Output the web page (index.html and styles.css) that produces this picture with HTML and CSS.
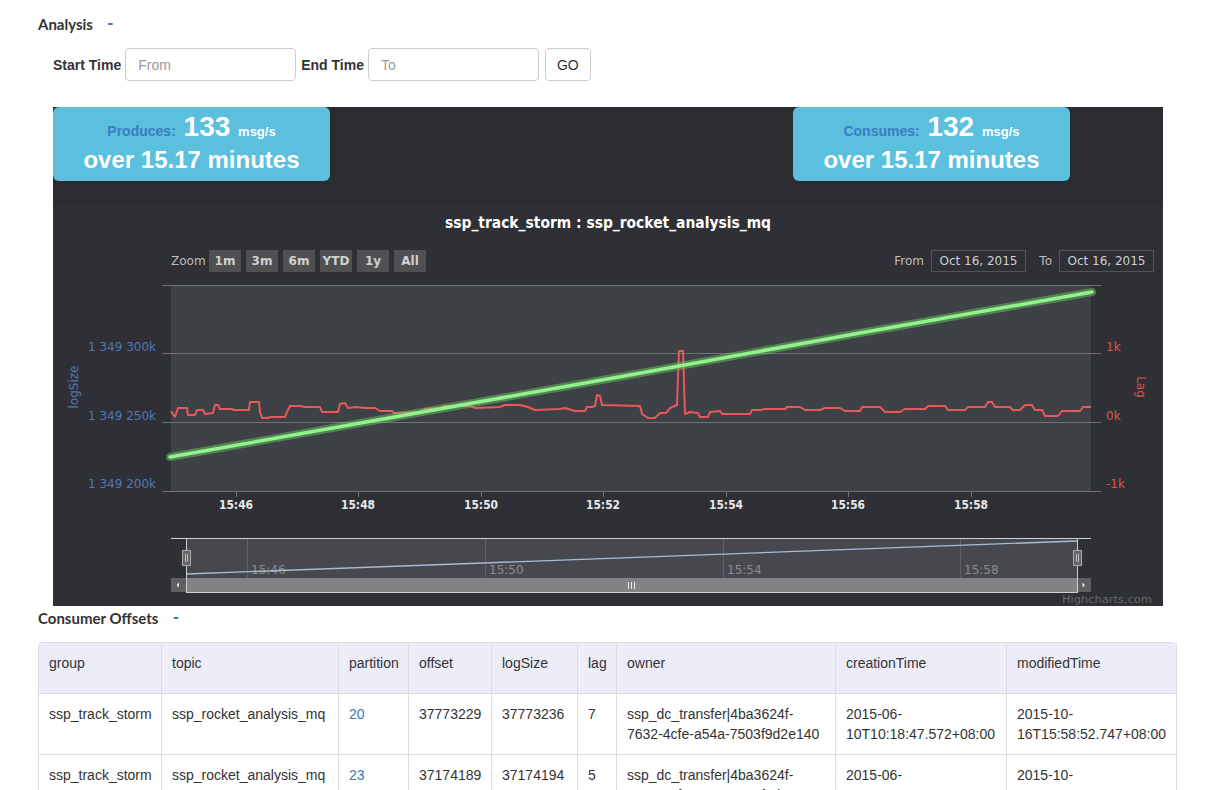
FILE: index.html
```html
<!DOCTYPE html>
<html>
<head>
<meta charset="utf-8">
<title>Analysis</title>
<link rel="stylesheet" href="styles.css">
</head>
<body>
<div class="page">
  <div class="section-title">Analysis <a class="toggle">-</a></div>
  <form class="range-form">
    <label>Start Time</label>
    <input type="text" placeholder="From">
    <label>End Time</label>
    <input type="text" placeholder="To">
    <button type="button">GO</button>
  </form>

  <div class="chart">
    <div class="stats">
      <div class="stat">
        <div class="stat-line1"><span class="stat-label">Produces:</span> <span class="stat-num">133</span> <span class="stat-unit">msg/s</span></div>
        <div class="stat-line2">over 15.17 minutes</div>
      </div>
      <div class="stat">
        <div class="stat-line1"><span class="stat-label">Consumes:</span> <span class="stat-num">132</span> <span class="stat-unit">msg/s</span></div>
        <div class="stat-line2">over 15.17 minutes</div>
      </div>
    </div>
    <svg class="chart-svg" viewBox="53 206 1110 400" width="1110" height="400" xmlns="http://www.w3.org/2000/svg">
      <text class="c-title" x="608" y="228" text-anchor="middle" textLength="326" lengthAdjust="spacingAndGlyphs">ssp_track_storm : ssp_rocket_analysis_mq</text>

      <text class="c-label" x="171" y="265">Zoom</text>
      <g class="c-btn">
        <rect x="209" y="250" width="32" height="22"/><text x="225" y="265">1m</text>
        <rect x="246" y="250" width="32" height="22"/><text x="262" y="265">3m</text>
        <rect x="283" y="250" width="32" height="22"/><text x="299" y="265">6m</text>
        <rect x="320" y="250" width="32" height="22"/><text x="336" y="265">YTD</text>
        <rect x="357" y="250" width="32" height="22"/><text x="373" y="265">1y</text>
        <rect x="394" y="250" width="32" height="22"/><text x="410" y="265">All</text>
      </g>

      <text class="c-label" x="924" y="265" text-anchor="end">From</text>
      <rect class="c-date-box" x="931.5" y="250.5" width="94" height="21"/>
      <text class="c-date" x="978.5" y="265">Oct 16, 2015</text>
      <text class="c-label" x="1052" y="265" text-anchor="end">To</text>
      <rect class="c-date-box" x="1059.5" y="250.5" width="94" height="21"/>
      <text class="c-date" x="1106.5" y="265">Oct 16, 2015</text>

      <rect class="c-plot" x="171" y="285" width="920" height="206"/>
      <g class="c-grid">
        <line x1="162" y1="285.5" x2="1101" y2="285.5"/>
        <line x1="162" y1="353.5" x2="1101" y2="353.5"/>
        <line x1="162" y1="422.5" x2="1101" y2="422.5"/>
        <line x1="162" y1="491.5" x2="1101" y2="491.5"/>
        <line x1="236.5" y1="491" x2="236.5" y2="497"/>
        <line x1="358.5" y1="491" x2="358.5" y2="497"/>
        <line x1="481.5" y1="491" x2="481.5" y2="497"/>
        <line x1="603.5" y1="491" x2="603.5" y2="497"/>
        <line x1="726.5" y1="491" x2="726.5" y2="497"/>
        <line x1="848.5" y1="491" x2="848.5" y2="497"/>
        <line x1="971.5" y1="491" x2="971.5" y2="497"/>
      </g>

      <g class="c-ylab-left">
        <text x="156" y="351">1 349 300k</text>
        <text x="156" y="420">1 349 250k</text>
        <text x="156" y="488">1 349 200k</text>
      </g>
      <text class="c-ytitle-left" transform="translate(78 387) rotate(-90)">logSize</text>
      <g class="c-ylab-right">
        <text x="1106" y="351">1k</text>
        <text x="1106" y="420">0k</text>
        <text x="1106" y="488">-1k</text>
      </g>
      <text class="c-ytitle-right" transform="translate(1137 387) rotate(90)">Lag</text>

      <g class="c-xlab">
        <text x="236" y="509" textLength="34" lengthAdjust="spacingAndGlyphs">15:46</text>
        <text x="358" y="509" textLength="34" lengthAdjust="spacingAndGlyphs">15:48</text>
        <text x="481" y="509" textLength="34" lengthAdjust="spacingAndGlyphs">15:50</text>
        <text x="603" y="509" textLength="34" lengthAdjust="spacingAndGlyphs">15:52</text>
        <text x="726" y="509" textLength="34" lengthAdjust="spacingAndGlyphs">15:54</text>
        <text x="848" y="509" textLength="34" lengthAdjust="spacingAndGlyphs">15:56</text>
        <text x="971" y="509" textLength="34" lengthAdjust="spacingAndGlyphs">15:58</text>
      </g>

      <path class="c-lag" d="M171 411 L175 417 L178 408 L187 408 L188 415 L195 415 L197 410 L203 410 L205 414 L213 413 L215 405 L218 405 L220 409 L232 409 L234 410 L249 410 L250 402 L259 402 L260 412 L262 418 L268 418 L270 417 L285 417 L287 412 L290 406 L300 406 L305 407 L320 407 L322 412 L338 412 L340 404 L345 403 L348 408 L356 407 L365 408 L375 408 L380 411 L392 411 L394 413 L420 412 L425 409 L440 408 L445 406 L470 406 L475 408 L500 407 L505 405 L520 405 L528 407 L535 410 L560 409 L565 408 L575 411 L585 411 L587 407 L592 407 L595 406 L597 395 L600 396 L602 405 L640 406 L642 414 L648 418 L655 418 L660 413 L666 413 L670 408 L677 405 L679 351 L683 351 L685 414 L690 412 L698 413 L700 417 L708 417 L710 412 L720 411 L722 414 L750 414 L752 410 L760 410 L765 409 L785 409 L787 407 L800 407 L805 410 L820 410 L825 408 L840 408 L845 411 L860 411 L862 407 L880 407 L885 412 L900 412 L905 409 L925 409 L928 406 L945 406 L948 410 L965 410 L968 407 L985 407 L988 402 L992 402 L995 407 L1010 407 L1013 410 L1020 410 L1025 405 L1032 405 L1035 410 L1042 410 L1045 416 L1058 416 L1062 411 L1080 411 L1083 407 L1091 407"/>
      <path class="c-size-glow" d="M170 457 L400 416 L630 375 L860 333 L1092 292"/>
      <path class="c-size" d="M170 457 L400 416 L630 375 L860 333 L1092 292"/>

      <!-- navigator -->
      <rect class="c-nav-bg" x="186" y="538" width="891" height="40"/>
      <g class="c-nav-grid">
        <line x1="247.5" y1="538" x2="247.5" y2="578"/>
        <line x1="485.5" y1="538" x2="485.5" y2="578"/>
        <line x1="723.5" y1="538" x2="723.5" y2="578"/>
        <line x1="960.5" y1="538" x2="960.5" y2="578"/>
      </g>
      <g class="c-nav-lab">
        <text x="251" y="574">15:46</text>
        <text x="489" y="574">15:50</text>
        <text x="727" y="574">15:54</text>
        <text x="964" y="574">15:58</text>
      </g>
      <path class="c-nav-series" d="M186 574 L1077 541"/>
      <rect class="c-scroll-thumb" x="186" y="578" width="891" height="14"/>
      <g class="c-grip">
        <line x1="628.5" y1="582" x2="628.5" y2="589"/>
        <line x1="631.5" y1="582" x2="631.5" y2="589"/>
        <line x1="634.5" y1="582" x2="634.5" y2="589"/>
      </g>
      <rect class="c-scroll-btn" x="171" y="578" width="15" height="14"/>
      <rect class="c-scroll-btn" x="1077" y="578" width="14" height="14"/>
      <path class="c-arrow" d="M176.5 585 L179 582.5 L179 587.5 Z"/>
      <path class="c-arrow" d="M1085 585 L1082.5 582.5 L1082.5 587.5 Z"/>
      <path class="c-nav-outline" d="M171 538.5 L1091 538.5 M186.5 538 L186.5 592.5 M1077.5 538 L1077.5 592.5 M186 592.5 L1078 592.5"/>
      <g class="c-handle">
        <rect x="182.5" y="550.5" width="8" height="15"/>
        <rect x="1073.5" y="550.5" width="8" height="15"/>
      </g>
      <g class="c-handle-lines">
        <line x1="185.5" y1="554" x2="185.5" y2="562"/>
        <line x1="187.5" y1="554" x2="187.5" y2="562"/>
        <line x1="1076.5" y1="554" x2="1076.5" y2="562"/>
        <line x1="1078.5" y1="554" x2="1078.5" y2="562"/>
      </g>
      <text class="c-credits" x="1152" y="603" text-anchor="end" textLength="90" lengthAdjust="spacingAndGlyphs">Highcharts.com</text>
    </svg>
  </div>

  <div class="section-title section-title-2">Consumer Offsets <a class="toggle">-</a></div>

  <table class="offsets">
    <colgroup>
      <col class="w-group"><col class="w-topic"><col class="w-partition"><col class="w-offset"><col class="w-logsize"><col class="w-lag"><col class="w-owner"><col class="w-ctime"><col class="w-mtime">
    </colgroup>
    <thead>
      <tr><th>group</th><th>topic</th><th>partition</th><th>offset</th><th>logSize</th><th>lag</th><th>owner</th><th>creationTime</th><th>modifiedTime</th></tr>
    </thead>
    <tbody>
      <tr>
        <td>ssp_track_storm</td><td>ssp_rocket_analysis_mq</td><td><a class="link">20</a></td><td>37773229</td><td>37773236</td><td>7</td>
        <td>ssp_dc_transfer|4ba3624f-<br>7632-4cfe-a54a-7503f9d2e140</td><td>2015-06-<br>10T10:18:47.572+08:00</td><td>2015-10-<br>16T15:58:52.747+08:00</td>
      </tr>
      <tr>
        <td>ssp_track_storm</td><td>ssp_rocket_analysis_mq</td><td><a class="link">23</a></td><td>37174189</td><td>37174194</td><td>5</td>
        <td>ssp_dc_transfer|4ba3624f-<br>7632-4cfe-a54a-7503f9d2e140</td><td>2015-06-<br>10T10:18:47.568+08:00</td><td>2015-10-<br>16T15:58:52.744+08:00</td>
      </tr>
    </tbody>
  </table>
</div>
</body>
</html>
```

FILE: styles.css
```css
* { box-sizing: border-box; }
html, body { margin: 0; padding: 0; background: #fff; }
body {
  font-family: "Liberation Sans", Arial, sans-serif;
  font-size: 14px;
  line-height: 20px;
  color: #333;
}
.page { padding: 14px 29px 0 38px; }

.section-title {
  font-family: Lato, "Liberation Sans", sans-serif;
  font-weight: 700;
  font-size: 15px;
  line-height: 20px;
  height: 20px;
  color: #333;
}
.section-title-2 { margin-top: 2px; }
.toggle {
  color: #337ab7;
  margin-left: 11px;
  text-decoration: none;
  font-family: "Liberation Sans", Arial, sans-serif;
  font-weight: 900;
  font-size: 17px;
  position: relative;
  top: -2px;
}

.range-form {
  display: flex;
  align-items: center;
  height: 33px;
  margin: 14px 0 0 15px;
}
.range-form label { font-weight: bold; margin-right: 4px; }
.range-form input {
  width: 171px;
  height: 33px;
  padding: 6px 12px;
  border: 1px solid #ccc;
  border-radius: 4px;
  font: 14px "Liberation Sans", Arial, sans-serif;
  color: #555;
  margin-right: 5px;
  outline: none;
}
.range-form input::placeholder { color: #999; }
.range-form button {
  height: 33px;
  padding: 0 11px;
  margin-left: 1px;
  border: 1px solid #ccc;
  border-radius: 4px;
  background: #fff;
  font: 14px "Liberation Sans", Arial, sans-serif;
  color: #333;
}

.chart {
  width: 1110px;
  margin: 26px 0 0 15px;
  background: #2e3035;
}
.stats {
  display: flex;
  height: 99px;
  background: #2a2c30;
}
.stat {
  width: 277px;
  height: 74px;
  padding-top: 3px;
  background: #5bc0de;
  border-radius: 6px;
  color: #fff;
  text-align: center;
  font-family: "Liberation Sans", Arial, sans-serif;
  font-weight: bold;
}
.stat + .stat { margin-left: 463px; }
.stat-line1 { font-size: 28px; line-height: 34px; height: 34px; }
.stat-label { font-size: 14px; color: #3a7cc2; }
.stat-num { font-size: 28px; }
.stat-unit { font-size: 13px; }
.stat-line2 { font-size: 24px; line-height: 32px; }

.chart-svg { display: block; }
.c-title { font-family: "DejaVu Sans", sans-serif; font-weight: bold; font-size: 15px; fill: #fff; }
.c-label { font-family: "DejaVu Sans", sans-serif; font-size: 12px; fill: #bdbdbd; }
.c-btn rect { fill: #505053; }
.c-btn text { font-family: "DejaVu Sans", sans-serif; font-size: 12px; font-weight: bold; fill: #d0d0d0; text-anchor: middle; }
.c-date-box { fill: none; stroke: #505358; stroke-width: 1; }
.c-date { font-family: "DejaVu Sans", sans-serif; font-size: 12px; fill: #cfcfcf; text-anchor: middle; }
.c-plot { fill: #3e4146; }
.c-grid line { stroke: #707276; stroke-width: 1; }
.c-ylab-left text { font-family: "DejaVu Sans", sans-serif; font-size: 12px; fill: #5277b8; text-anchor: end; }
.c-ytitle-left { font-family: "DejaVu Sans", sans-serif; font-size: 12px; fill: #5277b8; text-anchor: middle; }
.c-ylab-right text { font-family: "DejaVu Sans", sans-serif; font-size: 12px; fill: #e0504f; }
.c-ytitle-right { font-family: "DejaVu Sans", sans-serif; font-size: 12px; fill: #e0504f; text-anchor: middle; }
.c-xlab text { font-family: "DejaVu Sans", sans-serif; font-size: 12px; font-weight: bold; fill: #e8e8ea; text-anchor: middle; }
.c-lag { fill: none; stroke: #e85a5a; stroke-width: 2; stroke-linejoin: round; }
.c-size-glow { fill: none; stroke: rgba(110, 210, 100, 0.45); stroke-width: 8; stroke-linecap: round; }
.c-size { fill: none; stroke: #92f28c; stroke-width: 3.5; stroke-linecap: round; }
.c-nav-bg { fill: #46484d; }
.c-nav-grid line { stroke: #5e6065; stroke-width: 1; }
.c-nav-lab text { font-family: "DejaVu Sans", sans-serif; font-size: 12px; fill: #8c8c90; }
.c-nav-series { fill: none; stroke: #a6bbd8; stroke-width: 1.3; }
.c-scroll-thumb { fill: #838385; }
.c-scroll-btn { fill: #5f5f62; }
.c-arrow { fill: #e6e6e6; }
.c-grip line { stroke: #e6e6e6; stroke-width: 1; }
.c-nav-outline { fill: none; stroke: #d0d0d0; stroke-width: 1; }
.c-handle rect { fill: #666; stroke: #aaa; stroke-width: 1; }
.c-handle-lines line { stroke: #bbb; stroke-width: 1; }
.c-credits { font-family: "DejaVu Sans", sans-serif; font-size: 11px; fill: #666; }

.offsets {
  width: 1139px;
  table-layout: fixed;
  border-collapse: separate;
  border-spacing: 0;
  border: 1px solid #ddd;
  border-radius: 4px;
  margin-top: 14px;
}
.w-group { width: 122px; }
.w-topic { width: 177px; }
.w-partition { width: 70px; }
.w-offset { width: 83px; }
.w-logsize { width: 86px; }
.w-lag { width: 39px; }
.w-owner { width: 219px; }
.w-ctime { width: 171px; }
.w-mtime { width: 170px; }
.offsets th, .offsets td {
  padding: 10px;
  text-align: left;
  vertical-align: top;
  font-weight: normal;
  border-left: 1px solid #ddd;
  white-space: nowrap;
  overflow: hidden;
}
.offsets th { background: #edecf9; padding-bottom: 20px; }
.offsets th:first-child { border-top-left-radius: 3px; }
.offsets th:last-child { border-top-right-radius: 3px; }
.offsets th:first-child, .offsets td:first-child { border-left: none; }
.offsets td { border-top: 1px solid #ddd; }
.link { color: #337ab7; text-decoration: none; }
```
